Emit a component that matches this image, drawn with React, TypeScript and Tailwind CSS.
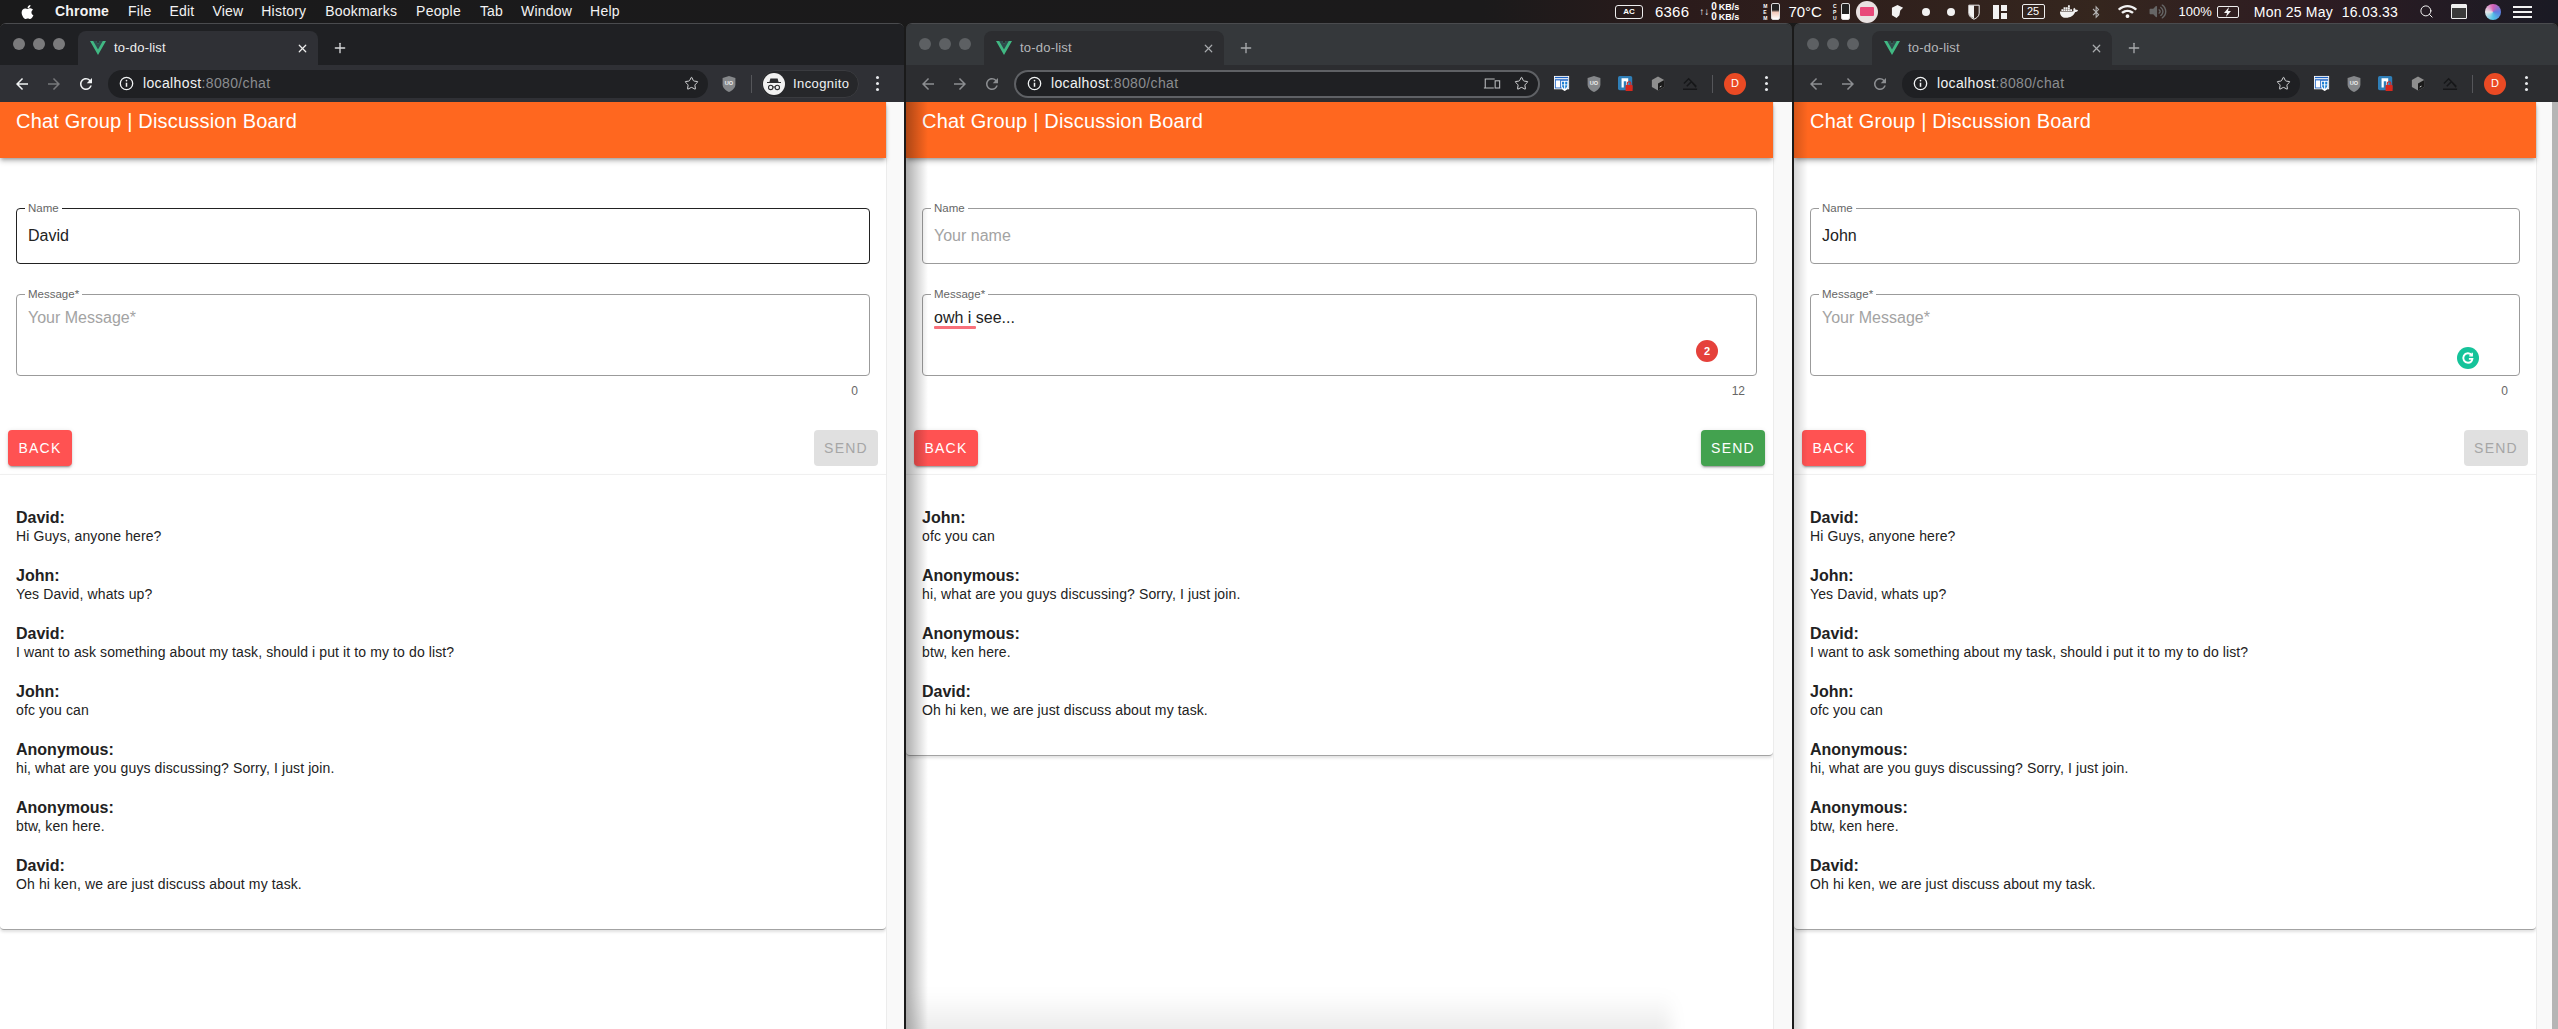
import React from "react";
import { Star, X, Plus, Search } from "lucide-react";
import { FaApple, FaDocker, FaBluetoothB, FaWifi, FaVolumeUp } from "react-icons/fa";

type Msg = [string, string];
const all: Msg[] = [
  ["David:", "Hi Guys, anyone here?"],
  ["John:", "Yes David, whats up?"],
  ["David:", "I want to ask something about my task, should i put it to my to do list?"],
  ["John:", "ofc you can"],
  ["Anonymous:", "hi, what are you guys discussing? Sorry, I just join."],
  ["Anonymous:", "btw, ken here."],
  ["David:", "Oh hi ken, we are just discuss about my task."],
];

function Back({ c }: { c: string }) {
  return (
    <svg viewBox="0 0 24 24" className="w-[18px] h-[18px]" fill={c}>
      <path d="M20 11H7.83l5.59-5.59L12 4l-8 8 8 8 1.41-1.41L7.83 13H20v-2z" />
    </svg>
  );
}
function Forward({ c }: { c: string }) {
  return (
    <svg viewBox="0 0 24 24" className="w-[18px] h-[18px]" fill={c}>
      <path d="M12 4l-1.41 1.41L16.17 11H4v2h12.17l-5.58 5.59L12 20l8-8z" />
    </svg>
  );
}
function Reload({ c }: { c: string }) {
  return (
    <svg viewBox="0 0 24 24" className="w-[18px] h-[18px]" fill={c}>
      <path d="M17.65 6.35A7.958 7.958 0 0012 4c-4.42 0-7.99 3.58-7.99 8s3.57 8 7.99 8c3.73 0 6.84-2.55 7.73-6h-2.08A5.99 5.99 0 0112 18c-3.31 0-6-2.69-6-6s2.69-6 6-6c1.66 0 3.14.69 4.22 1.78L13 11h7V4l-2.35 2.35z" />
    </svg>
  );
}
function InfoIcon() {
  return (
    <svg viewBox="0 0 16 16" className="w-[15px] h-[15px] shrink-0" fill="none" stroke="#f1f3f4" strokeWidth="1.4">
      <circle cx="8" cy="8" r="6.6" />
      <path d="M8 7.2v4.2" strokeWidth="1.6" />
      <circle cx="8" cy="4.9" r="0.9" fill="#f1f3f4" stroke="none" />
    </svg>
  );
}
function Dots() {
  return (
    <div className="flex flex-col gap-[3px] items-center">
      <span className="w-[3px] h-[3px] rounded-full bg-[#e8eaed]" />
      <span className="w-[3px] h-[3px] rounded-full bg-[#e8eaed]" />
      <span className="w-[3px] h-[3px] rounded-full bg-[#e8eaed]" />
    </div>
  );
}
function VueLogo() {
  return (
    <svg viewBox="0 0 256 221" className="w-[16px] h-[14px] shrink-0">
      <path fill="#41B883" d="M204.8 0H256L128 220.8 0 0h97.92L128 51.2 157.44 0h47.36z" />
      <path fill="#2f4a4c" d="M50.56 0L128 133.12 204.8 0h-47.36L128 51.2 97.92 0H50.56z" />
    </svg>
  );
}
function UBlock() {
  return (
    <svg viewBox="0 0 20 22" className="w-[16px] h-[18px]">
      <path fill="#85878a" d="M10 1l8 2.4v8.2c0 4.6-4 7.6-8 9.4-4-1.8-8-4.8-8-9.4V3.4z" />
      <text x="10" y="12.5" fontSize="7" textAnchor="middle" fill="#eee" fontWeight="700" fontFamily="Liberation Sans">UO</text>
    </svg>
  );
}
function ExtWindow() {
  return (
    <svg viewBox="0 0 18 18" className="w-[16px] h-[17px]">
      <rect x="0.5" y="1" width="16" height="14" fill="#1c63c4" stroke="#fff" />
      <rect x="1" y="3" width="15" height="1.2" fill="#fff" />
      <rect x="2" y="5.5" width="5" height="8" fill="#fff" />
      <path fill="#fff" d="M8 6h8v6c0 2.5-2 4.5-4 5.5-2-1-4-3-4-5.5z" />
      <path fill="#1c7fd4" d="M9 7h2.4v3H9zM12.6 7H15v3h-2.4zM9 11h2.4v4c-1.2-.8-2.4-2.2-2.4-4zM12.6 11H15c0 1.8-1.2 3.2-2.4 4z" />
    </svg>
  );
}
function ExtLock() {
  return (
    <svg viewBox="0 0 18 18" className="w-[16px] h-[16px]">
      <rect width="16" height="16" x="0" y="0" rx="2" fill="#2f7fb8" />
      <path fill="#fff" d="M4 2.5h7.5v7l-2.2 1.8V6H6.5v7H4z" />
      <rect x="8.5" y="10" width="8" height="7" rx="1" fill="#d8281d" />
      <path d="M10.5 10V8.4a2 2 0 014 0V10" fill="none" stroke="#d8281d" strokeWidth="1.2" />
    </svg>
  );
}
function ExtCube() {
  return (
    <svg viewBox="0 0 16 18" className="w-[14px] h-[17px]">
      <path fill="#8e8e8e" d="M8 1l7 4v8l-7 4-7-4V5z" />
      <path fill="#1b1b1b" d="M8 9l7-4v8l-7 4z" />
      <path d="M10 13l2-1" stroke="#ddd" strokeWidth="1" />
    </svg>
  );
}
function ExtScribble() {
  return (
    <svg viewBox="0 0 18 16" className="w-[17px] h-[15px]" fill="none" stroke="#161719" strokeWidth="1.6">
      <path d="M2 8l5-5 8 8M5 11l5-5 5 6M1 14h15" />
    </svg>
  );
}
function IncognitoIcon() {
  return (
    <svg viewBox="0 0 22 22" className="w-[22px] h-[22px]">
      <circle cx="11" cy="11" r="11" fill="#f1f1f1" />
      <path fill="#2b2c2f" d="M7.4 5.4h7.2l1 3.6H18v1H4V9h2.4z" />
      <circle cx="7.7" cy="14.4" r="2.2" fill="none" stroke="#2b2c2f" strokeWidth="1.1" />
      <circle cx="14.3" cy="14.4" r="2.2" fill="none" stroke="#2b2c2f" strokeWidth="1.1" />
      <path d="M9.8 14h2.4" stroke="#2b2c2f" strokeWidth="1.1" />
    </svg>
  );
}
function CastIcon() {
  return (
    <svg viewBox="0 0 20 16" className="w-[18px] h-[15px]" fill="none" stroke="#b9bbbe" strokeWidth="1.2">
      <path d="M13 3H2.5v9.5M1 13h11" />
      <rect x="13.5" y="5" width="5" height="8" />
    </svg>
  );
}

function Field({ label, value, placeholder, focused, tall, children }: { label: string; value?: string; placeholder?: string; focused?: boolean; tall?: boolean; children?: React.ReactNode }) {
  return (
    <div className={`relative rounded-[4px] border ${tall ? "h-[82px]" : "h-[56px]"} ${focused ? "border-[#222222]" : "border-[#9b9b9b]"}`}>
      <span className="absolute left-[8px] -top-[8px] bg-white px-[3px] text-[11.5px] leading-[14px] text-[#666666]">{label}</span>
      <div className={`absolute left-[11px] ${tall ? "top-[13px]" : "top-[17px]"} text-[16px] leading-[20px] ${value ? "text-[#222222]" : "text-[#a3a3a3]"}`}>
        {value || placeholder}
      </div>
      {children}
    </div>
  );
}

function Page({ name, nameFocused, msg, count, send, badge, messages, width }: { name?: string; nameFocused?: boolean; msg?: string; count: string; send: boolean; badge?: "red" | "green"; messages: Msg[]; width: string }) {
  return (
    <div className={`${width} shrink-0 flex flex-col bg-white`}>
      <div className="h-[56px] shrink-0 bg-[#ff671f] pl-[16px] pt-[5px] text-[20px] leading-[28px] tracking-[0.2px] text-white shadow-[0_2px_4px_-1px_rgba(0,0,0,.35),0_4px_5px_rgba(0,0,0,.14)] relative z-10">
        Chat Group | Discussion Board
      </div>
      <div className="pt-[50px] px-[8px] pb-[8px]">
        <div className="px-[8px]">
          <Field label="Name" value={name} placeholder="Your name" focused={nameFocused} />
          <div className="mt-[30px]">
            <Field label="Message*" value={msg} placeholder="Your Message*" tall>
              {msg && <span className="absolute left-[11px] top-[31px] w-[42px] h-[3px] bg-[#f8707a] rounded-[1px]" />}
              {badge === "red" && (
                <span className="absolute right-[38px] bottom-[13px] w-[22px] h-[22px] rounded-full bg-[#e5413b] text-white text-[11px] font-bold flex items-center justify-center">2</span>
              )}
              {badge === "green" && (
                <span className="absolute right-[40px] bottom-[6px] w-[22px] h-[22px] rounded-full bg-[#15c39a] flex items-center justify-center">
                  <svg viewBox="0 0 16 16" className="w-[14px] h-[14px]" fill="none" stroke="#fff" strokeWidth="2.2">
                    <path d="M12.5 5A5.4 5.4 0 108 13.4c2.6 0 4.6-1.6 5-4.4H9" />
                    <path d="M12.8 2v3.6H9.4" strokeWidth="1.6" />
                  </svg>
                </span>
              )}
            </Field>
          </div>
          <div className="mt-[8px] pr-[12px] text-right text-[12px] leading-[14px] text-[#666666]">{count}</div>
        </div>
        <div className="mt-[32px] flex justify-between">
          <div className="h-[36px] w-[64px] rounded-[4px] bg-[#ff5252] text-white text-[14px] tracking-[1.25px] flex items-center justify-center shadow-[0_3px_1px_-2px_rgba(0,0,0,.2),0_2px_2px_rgba(0,0,0,.14),0_1px_5px_rgba(0,0,0,.12)]">BACK</div>
          {send ? (
            <div className="h-[36px] w-[64px] rounded-[4px] bg-[#43a24f] text-white text-[14px] tracking-[1.25px] flex items-center justify-center shadow-[0_3px_1px_-2px_rgba(0,0,0,.2),0_2px_2px_rgba(0,0,0,.14),0_1px_5px_rgba(0,0,0,.12)]">SEND</div>
          ) : (
            <div className="h-[36px] w-[64px] rounded-[4px] bg-[#e0e0e0] text-[#a6a6a6] text-[14px] tracking-[1.25px] flex items-center justify-center">SEND</div>
          )}
        </div>
      </div>
      <div className="border-t border-[#f0f0f0] border-b border-b-[#a3a3a3] rounded-b-[4px] shadow-[0_2px_3px_rgba(0,0,0,.12)] px-[16px] pt-[33px] pb-[37px] flex flex-col gap-[22px]">
        {messages.map((m, i) => (
          <div key={i} className="text-[#222222]">
            <div className="text-[16px] leading-[20px] font-bold">{m[0]}</div>
            <div className="text-[14px] leading-[16px] tracking-[0.11px]">{m[1]}</div>
          </div>
        ))}
      </div>
    </div>
  );
}

function Chrome({ width, incognito, active, omni, omniBorder, cast, page, shadow, track }: { width: string; incognito?: boolean; active?: boolean; omni: string; omniBorder?: boolean; cast?: boolean; page: React.ReactNode; shadow?: string; track?: React.ReactNode }) {
  const strip = incognito ? "bg-[#1f2023]" : "bg-[#35383b]";
  const tab = incognito ? "bg-[#2f3035]" : "bg-[#2c2d30]";
  const bar = incognito ? "bg-[#2f3035]" : "bg-[#2c2d30]";
  const dot = incognito ? "bg-[#7a7a7c]" : "bg-[#5d6063]";
  const icon = active ? "#f1f3f4" : "#8c8e91";
  return (
    <div className={`${width} shrink-0 flex flex-col rounded-t-[6px] overflow-hidden border-t border-[#4a4b4e] relative`}>
      <div className={`${strip} h-[41px] shrink-0 flex`}>
        <div className="w-[78px] shrink-0 flex items-start pt-[14px] pl-[13px] gap-[8px]">
          <span className={`w-[12px] h-[12px] rounded-full ${dot}`} />
          <span className={`w-[12px] h-[12px] rounded-full ${dot}`} />
          <span className={`w-[12px] h-[12px] rounded-full ${dot}`} />
        </div>
        <div className={`${tab} mt-[7px] w-[240px] shrink-0 rounded-t-[8px] flex items-center pl-[12px] pr-[9px]`}>
          <VueLogo />
          <span className={`ml-[8px] flex-1 text-[13px] tracking-[0.2px] ${active ? "text-[#eeeeee]" : "text-[#b5b7ba]"}`}>to-do-list</span>
          <X size={13} strokeWidth={2.2} color={active ? "#eeeeee" : "#a8aaad"} />
        </div>
        <div className="ml-[14px] flex items-center pt-[7px]">
          <Plus size={16} strokeWidth={2} color={active ? "#d8d9db" : "#a8aaad"} />
        </div>
      </div>
      <div className={`${bar} h-[37px] shrink-0 flex items-center`}>
        <div className="w-[108px] shrink-0 flex pl-[6px]">
          <div className="w-[32px] flex justify-center"><Back c={icon} /></div>
          <div className="w-[32px] flex justify-center"><Forward c={active ? "#77787b" : "#8c8e91"} /></div>
          <div className="w-[32px] flex justify-center"><Reload c={icon} /></div>
        </div>
        <div className={`${omni} h-[28px] shrink-0 rounded-full bg-[#1f2023] flex items-center pl-[11px] pr-[9px] ${omniBorder ? "border-2 border-[#5f6165]" : ""}`}>
          <InfoIcon />
          <div className="ml-[9px] flex-1 text-[14px] tracking-[0.36px]">
            <span className="text-[#f1f3f4]">localhost</span>
            <span className="text-[#8b8d90]">:8080/chat</span>
          </div>
          {cast && <div className="mr-[13px]"><CastIcon /></div>}
          <Star size={15} strokeWidth={1.6} color="#d5d6d8" />
        </div>
        {incognito ? (
          <div className="flex-1 flex items-center pl-[13px]">
            <UBlock />
            <span className="ml-[14px] w-px h-[18px] bg-[#55565a]" />
            <div className="ml-[9px] w-[98px] h-[28px] rounded-full bg-[#26272a] border border-[#3a3b3f] flex items-center pl-px">
              <IncognitoIcon />
              <span className="ml-[8px] text-[13px] tracking-[0.4px] text-[#f1f3f4]">Incognito</span>
            </div>
            <div className="ml-[17px]"><Dots /></div>
          </div>
        ) : (
          <div className="flex-1 flex items-center pl-[6px]">
            <div className="w-[32px] flex justify-center"><ExtWindow /></div>
            <div className="w-[32px] flex justify-center"><UBlock /></div>
            <div className="w-[32px] flex justify-center"><ExtLock /></div>
            <div className="w-[32px] flex justify-center"><ExtCube /></div>
            <div className="w-[32px] flex justify-center"><ExtScribble /></div>
            <span className="ml-[6px] w-px h-[18px] bg-[#55565a]" />
            <span className="ml-[11px] w-[22px] h-[22px] rounded-full bg-[#ea4a24] text-white text-[11px] flex items-center justify-center">D</span>
            <div className="ml-[19px]"><Dots /></div>
          </div>
        )}
      </div>
      <div className="relative flex-1 flex min-h-0 bg-white overflow-hidden">
        {page}
        {track || <div className="flex-1 bg-[#f9f9f9] border-l border-[#ececec]" />}
        {shadow && <div className={`absolute left-0 top-0 bottom-0 z-20 pointer-events-none ${shadow}`} />}
      </div>
    </div>
  );
}

function StatusBar() {
  return (
    <div className="h-[23px] shrink-0 flex items-center text-white bg-[linear-gradient(90deg,#1a1a1b_0%,#1b1a1b_58%,#2b1b1b_66%,#35261e_82%,#2e1c22_90%,#1a1a24_100%)]">
      <div className="w-[1615px] shrink-0 flex items-center text-[14px] tracking-[0.2px] text-[#f3f3f3]">
        <FaApple className="ml-[20px] w-[15px] h-[16px] text-white" />
        <span className="ml-[20px] font-bold">Chrome</span>
        <span className="ml-[19px]">File</span>
        <span className="ml-[18px]">Edit</span>
        <span className="ml-[18px]">View</span>
        <span className="ml-[18px]">History</span>
        <span className="ml-[19px]">Bookmarks</span>
        <span className="ml-[19px]">People</span>
        <span className="ml-[19px]">Tab</span>
        <span className="ml-[18px]">Window</span>
        <span className="ml-[18px]">Help</span>
      </div>
      <div className="w-[28px] h-[14px] shrink-0 rounded-[3px] border border-[#eee] flex items-center justify-center text-[8px] font-bold">AC</div>
      <span className="ml-[12px] text-[15px] leading-none tracking-[0.2px]">6366</span>
      <span className="ml-[10px] text-[10px] font-bold leading-none">↑↓</span>
      <div className="ml-[2px] flex flex-col text-[9px] font-bold leading-[9px]">
        <span><span className="text-[10px] mr-[2px]">0</span>KB/s</span>
        <span><span className="text-[10px] mr-[2px]">0</span>KB/s</span>
      </div>
      <div className="ml-[24px] flex flex-col text-[5px] leading-[6px] font-bold"><span>M</span><span>E</span><span>M</span></div>
      <div className="ml-[4px] w-[9px] h-[17px] rounded-[2px] border border-[#ddd] bg-[linear-gradient(180deg,#222_0%,#222_40%,#f2c8b8_55%,#fff_100%)]" />
      <span className="ml-[8px] text-[15px] leading-none">70°C</span>
      <div className="ml-[11px] flex flex-col text-[5px] leading-[6px] font-bold"><span>C</span><span>P</span><span>U</span></div>
      <div className="ml-[4px] w-[9px] h-[17px] rounded-[2px] border border-[#ddd] bg-[linear-gradient(180deg,#222_0%,#222_65%,#fff_70%,#fff_100%)]" />
      <span className="ml-[6px] w-[22px] h-[22px] rounded-full bg-[#e9e2e2] flex items-center justify-center">
        <span className="w-[14px] h-[9px] rounded-[1px] bg-[#e8497a]" />
      </span>
      <svg viewBox="0 0 14 16" className="ml-[13px] w-[13px] h-[15px]"><path fill="#f2f2f2" d="M7 1l6 3-3 3-1 5-3 3-5-3V4z" /></svg>
      <span className="ml-[18px] w-[8px] h-[8px] rounded-full bg-[#f2f2f2]" />
      <span className="ml-[17px] w-[8px] h-[8px] rounded-full bg-[#f2f2f2]" />
      <svg viewBox="0 0 12 16" className="ml-[13px] w-[12px] h-[16px]"><path fill="none" stroke="#f2f2f2" strokeWidth="1" d="M.8 1.2h10.4v8c0 3-2.6 5-5.2 6-2.6-1-5.2-3-5.2-6z" /><path fill="#f2f2f2" d="M1 1.5h5v13c-2.5-1-5-3-5-5.5z" /></svg>
      <div className="ml-[13px] w-[14px] h-[14px] flex gap-[2px]">
        <span className="w-[6px] h-full bg-[#f2f2f2]" />
        <span className="w-[6px] flex flex-col gap-[2px]"><span className="h-[6px] bg-[#f2f2f2]" /><span className="h-[6px] bg-[#f2f2f2]" /></span>
      </div>
      <span className="ml-[15px] w-[23px] h-[15px] rounded-[2px] border border-[#eee] flex items-center justify-center text-[11px] leading-none">25</span>
      <FaDocker className="ml-[15px] w-[18px] h-[15px] text-[#f2f2f2]" />
      <FaBluetoothB className="ml-[14px] w-[8px] h-[14px] text-[#b5b5b5]" />
      <FaWifi className="ml-[18px] w-[19px] h-[15px] text-[#f2f2f2]" />
      <FaVolumeUp className="ml-[11px] w-[20px] h-[15px] text-[#666666]" />
      <span className="ml-[11px] text-[13px] leading-none">100%</span>
      <div className="ml-[5px] w-[22px] h-[12px] rounded-[2px] border border-[#eee] flex items-center justify-center">
        <svg viewBox="0 0 10 10" className="w-[10px] h-[10px]"><path fill="#f2f2f2" d="M6 0L1 6h3l-1 4 5-6H5z" /></svg>
      </div>
      <span className="ml-[15px] text-[14px] leading-none tracking-[0.2px]">Mon 25 May</span>
      <span className="ml-[9px] text-[14px] leading-none tracking-[0.2px]">16.03.33</span>
      <Search size={15} strokeWidth={1.6} className="ml-[21px]" color="#f2f2f2" />
      <div className="ml-[17px] w-[16px] h-[15px] rounded-[1px] border border-[#eee] bg-[#3a3a3a] flex flex-col">
        <span className="h-[3px] bg-[#eeeeee]" />
      </div>
      <span className="ml-[18px] w-[16px] h-[16px] rounded-full bg-[conic-gradient(#d65fb6,#5c7de0,#52c3e6,#e6e6e6,#d65fb6)]" />
      <div className="ml-[12px] w-[19px] flex flex-col gap-[3px]">
        <span className="h-[2px] bg-[#f2f2f2]" />
        <span className="h-[2px] bg-[#f2f2f2]" />
        <span className="h-[2px] bg-[#f2f2f2]" />
      </div>
    </div>
  );
}

export default function App() {
  return (
    <div className="w-[2558px] h-[1029px] overflow-hidden flex flex-col bg-[#1a1a1a] font-['Liberation_Sans',Arial,sans-serif]">
      <StatusBar />
      <div className="flex-1 min-h-0 flex gap-[2px]">
        <Chrome
          width="w-[904px]"
          incognito
          active
          omni="w-[600px]"
          page={<Page width="w-[886px]" name="David" nameFocused count="0" send={false} messages={all} />}
        />
        <Chrome
          width="w-[886px]"
          omni="w-[526px]"
          omniBorder
          cast
          shadow="w-[22px] bg-[linear-gradient(90deg,rgba(0,0,0,.32),rgba(0,0,0,0))]"
          page={
            <>
              <Page width="w-[867px]" msg="owh i see..." count="12" send badge="red" messages={all.slice(3)} />
              <div className="absolute left-0 -bottom-[14px] w-[765px] h-[50px] z-20 pointer-events-none blur-[8px] bg-[linear-gradient(180deg,rgba(0,0,0,0),rgba(0,0,0,.1))]" />
            </>
          }
        />
        <Chrome
          width="w-[764px]"
          omni="w-[398px]"
          shadow="w-[14px] bg-[linear-gradient(90deg,rgba(0,0,0,.16),rgba(0,0,0,0))]"
          track={
            <div className="flex-1 flex bg-[#f9f9f9] border-l border-[#ececec] justify-end">
              <div className="w-[6px] bg-[#b5b5b5]" />
            </div>
          }
          page={<Page width="w-[742px]" name="John" count="0" send={false} badge="green" messages={all} />}
        />
      </div>
    </div>
  );
}
